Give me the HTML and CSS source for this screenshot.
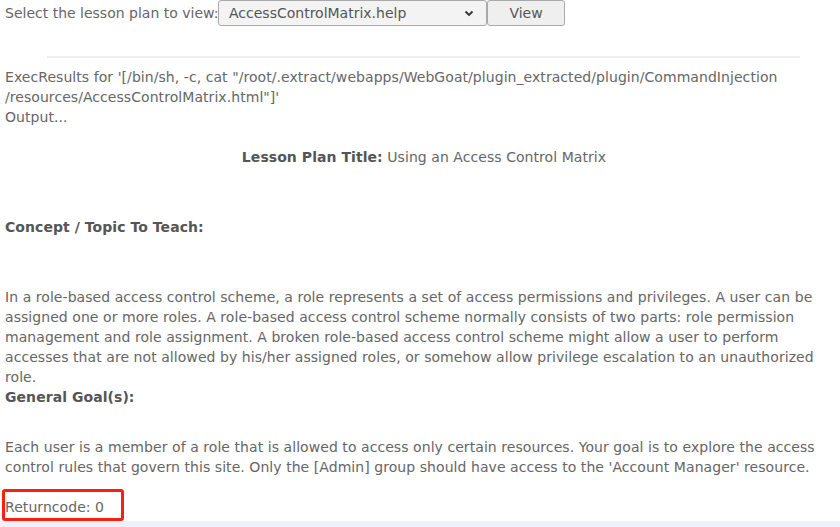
FILE: index.html
```html
<!DOCTYPE html>
<html>
<head>
<meta charset="utf-8">
<link rel="stylesheet" href="styles.css">
</head>
<body>
<div class="page">
  <form class="picker">
    <span class="picker-label">Select the lesson plan to view:</span>
    <div class="select">
      <span class="select-value">AccessControlMatrix.help</span>
      <svg class="chevron" width="10" height="7" viewBox="0 0 10 7"><path d="M1.5 1.5 L5 5 L8.5 1.5" fill="none" stroke="#333" stroke-width="1.8"/></svg>
    </div>
    <button type="button" class="view-btn">View</button>
  </form>
  <div class="rule"></div>
  <div class="output">
    <p class="exec">ExecResults for '[/bin/sh, -c, cat "/root/.extract/webapps/WebGoat/plugin_extracted/plugin/CommandInjection<br>/resources/AccessControlMatrix.html"]'<br>Output...</p>
    <p class="title"><b>Lesson Plan Title:</b> Using an Access Control Matrix</p>
    <p class="heading concept"><b>Concept / Topic To Teach:</b></p>
    <p class="body concept-body">In a role-based access control scheme, a role represents a set of access permissions and privileges. A user can be assigned one or more roles. A role-based access control scheme normally consists of two parts: role permission management and role assignment. A broken role-based access control scheme might allow a user to perform accesses that are not allowed by his/her assigned roles, or somehow allow privilege escalation to an unauthorized role.</p>
    <p class="heading"><b>General Goal(s):</b></p>
    <p class="body goal-body">Each user is a member of a role that is allowed to access only certain resources. Your goal is to explore the access control rules that govern this site. Only the [Admin] group should have access to the 'Account Manager' resource.</p>
    <div class="returncode"><span class="highlight">Returncode: 0</span></div>
  </div>
</div>
<div class="footer-strip"></div>
</body>
</html>
```
FILE: styles.css
```css
html, body {
  margin: 0;
  padding: 0;
  background: #ffffff;
}
body {
  font-family: "DejaVu Sans", sans-serif;
  font-size: 14px;
  line-height: 20px;
  color: #666666;
}
.page {
  padding: 0 5px;
  height: 521px;
  box-sizing: border-box;
  overflow: hidden;
}
.picker {
  display: flex;
  align-items: center;
  height: 26px;
  margin: 0;
}
.picker-label {
  white-space: nowrap;
  width: 213px;
}
.select {
  width: 269px;
  height: 26px;
  box-sizing: border-box;
  border: 1px solid #a9a9a9;
  border-radius: 3px;
  background: #f3f3f3;
  display: flex;
  align-items: center;
  justify-content: space-between;
  padding: 0 12px 0 10px;
  color: #555555;
}
.view-btn {
  width: 78px;
  height: 26px;
  box-sizing: border-box;
  border: 1px solid #a9a9a9;
  border-radius: 3px;
  background: #efefef;
  font-family: "DejaVu Sans", sans-serif;
  font-size: 14px;
  color: #555555;
  padding: 0;
}
.rule {
  margin: 30px 35px 0 42px;
  height: 2px;
  background: #eeeeee;
}
.output {
  letter-spacing: 0.06px;
}
.output p {
  margin: 0;
}
.exec {
  margin-top: 9px !important;
}
.title {
  text-align: center;
  margin-top: 20px !important;
  padding-left: 8px;
}
b {
  color: #555555;
}
.concept {
  margin-top: 50px !important;
}
.concept-body {
  margin-top: 50px !important;
}
.goal-body {
  margin-top: 30px !important;
}
.returncode {
  margin-top: 20px;
}
.highlight {
  position: relative;
}
.highlight::after {
  content: "";
  position: absolute;
  left: -3px;
  top: -10px;
  width: 116px;
  height: 26px;
  border: 3px solid #fb1f12;
  border-radius: 3px;
}
.footer-strip {
  height: 6px;
  background: #f0f1f6;
}
```
